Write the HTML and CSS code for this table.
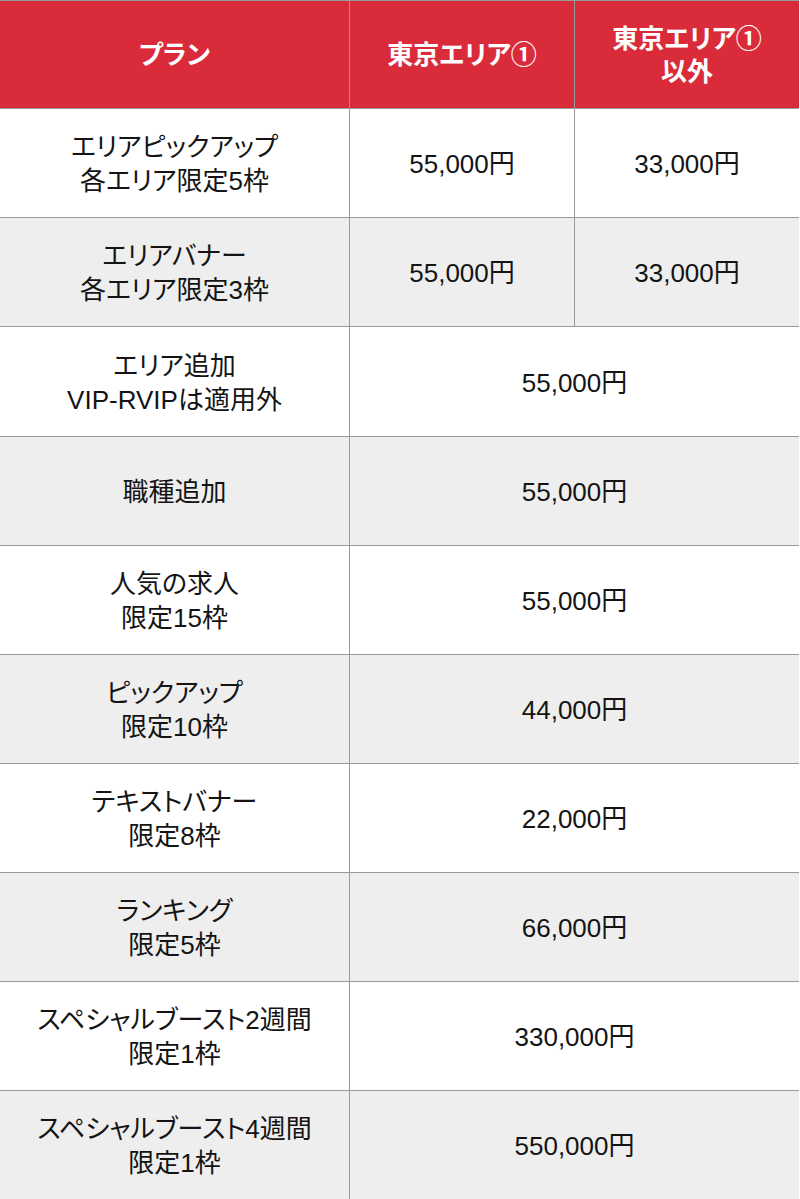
FILE: index.html
```html
<!DOCTYPE html>
<html lang="ja">
<head>
<meta charset="utf-8">
<title>料金表</title>
<link rel="stylesheet" href="styles.css">
</head>
<body>
<div class="price-table">
  <div class="cell head">プラン</div>
  <div class="cell head">東京エリア①</div>
  <div class="cell head">東京エリア①<br>以外</div>

  <div class="cell">エリアピックアップ<br>各エリア限定5枠</div>
  <div class="cell">55,000円</div>
  <div class="cell">33,000円</div>

  <div class="cell alt">エリアバナー<br>各エリア限定3枠</div>
  <div class="cell alt">55,000円</div>
  <div class="cell alt">33,000円</div>

  <div class="cell">エリア追加<br>VIP-RVIPは適用外</div>
  <div class="cell wide">55,000円</div>

  <div class="cell alt">職種追加</div>
  <div class="cell alt wide">55,000円</div>

  <div class="cell">人気の求人<br>限定15枠</div>
  <div class="cell wide">55,000円</div>

  <div class="cell alt">ピックアップ<br>限定10枠</div>
  <div class="cell alt wide">44,000円</div>

  <div class="cell">テキストバナー<br>限定8枠</div>
  <div class="cell wide">22,000円</div>

  <div class="cell alt">ランキング<br>限定5枠</div>
  <div class="cell alt wide">66,000円</div>

  <div class="cell">スペシャルブースト2週間<br>限定1枠</div>
  <div class="cell wide">330,000円</div>

  <div class="cell alt">スペシャルブースト4週間<br>限定1枠</div>
  <div class="cell alt wide">550,000円</div>
</div>
</body>
</html>
```

FILE: styles.css
```css
html, body {
  margin: 0;
  padding: 0;
  background: #ffffff;
}

body {
  font-family: "Liberation Sans", "Noto Sans CJK JP", sans-serif;
  font-size: 26px;
  line-height: 34px;
  color: #141414;
  font-feature-settings: "palt";
}

.price-table {
  display: grid;
  grid-template-columns: 349px 224px 224px;
  grid-template-rows: 107px 108px 108px 109px;
  grid-auto-rows: 108px;
  gap: 1px;
  padding: 1px 1px 0 0;
  width: 798px;
  background: #999999;
}

.cell {
  display: flex;
  align-items: center;
  justify-content: center;
  text-align: center;
  padding-top: 2px;
  background: #ffffff;
}

.cell.alt {
  background: #eeeeee;
}

.cell.wide {
  grid-column: span 2;
}

.cell.head {
  background: #d92b3a;
  color: #ffffff;
  font-weight: bold;
  line-height: 33px;
}
```
